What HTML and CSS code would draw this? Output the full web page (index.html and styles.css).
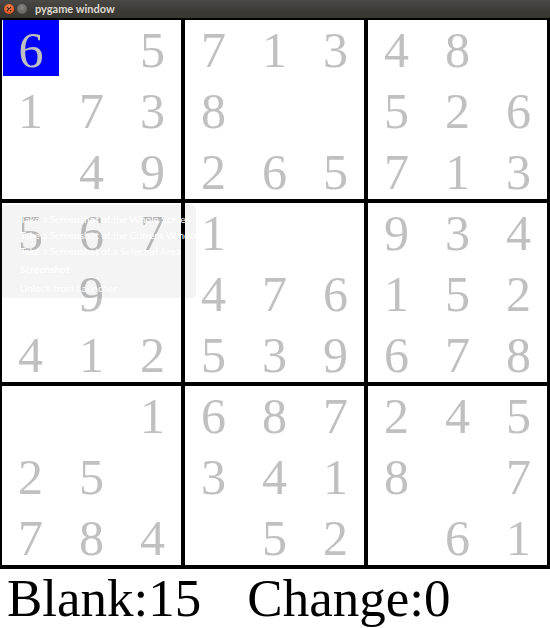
FILE: index.html
```html
<!DOCTYPE html>
<html>
<head>
<meta charset="utf-8">
<link rel="stylesheet" href="styles.css">
</head>
<body>
<div class="window">
  <div class="titlebar">
    <span class="btn close"><svg viewBox="0 0 10 10" width="10" height="10"><path d="M3.3 3.3 L6.7 6.7 M6.7 3.3 L3.3 6.7" stroke="#3a2a22" stroke-width="1.2" stroke-linecap="round"/></svg></span>
    <span class="btn min"></span>
    <span class="title">pygame window</span>
  </div>
  <div class="board">
    <div class="block">
      <div class="cell sel">6</div><div class="cell"></div><div class="cell">5</div>
      <div class="cell">1</div><div class="cell">7</div><div class="cell">3</div>
      <div class="cell"></div><div class="cell">4</div><div class="cell">9</div>
    </div>
    <div class="block">
      <div class="cell">7</div><div class="cell">1</div><div class="cell">3</div>
      <div class="cell">8</div><div class="cell"></div><div class="cell"></div>
      <div class="cell">2</div><div class="cell">6</div><div class="cell">5</div>
    </div>
    <div class="block">
      <div class="cell">4</div><div class="cell">8</div><div class="cell"></div>
      <div class="cell">5</div><div class="cell">2</div><div class="cell">6</div>
      <div class="cell">7</div><div class="cell">1</div><div class="cell">3</div>
    </div>
    <div class="block">
      <div class="cell">5</div><div class="cell">6</div><div class="cell">7</div>
      <div class="cell"></div><div class="cell">9</div><div class="cell"></div>
      <div class="cell">4</div><div class="cell">1</div><div class="cell">2</div>
    </div>
    <div class="block">
      <div class="cell">1</div><div class="cell"></div><div class="cell"></div>
      <div class="cell">4</div><div class="cell">7</div><div class="cell">6</div>
      <div class="cell">5</div><div class="cell">3</div><div class="cell">9</div>
    </div>
    <div class="block">
      <div class="cell">9</div><div class="cell">3</div><div class="cell">4</div>
      <div class="cell">1</div><div class="cell">5</div><div class="cell">2</div>
      <div class="cell">6</div><div class="cell">7</div><div class="cell">8</div>
    </div>
    <div class="block">
      <div class="cell"></div><div class="cell"></div><div class="cell">1</div>
      <div class="cell">2</div><div class="cell">5</div><div class="cell"></div>
      <div class="cell">7</div><div class="cell">8</div><div class="cell">4</div>
    </div>
    <div class="block">
      <div class="cell">6</div><div class="cell">8</div><div class="cell">7</div>
      <div class="cell">3</div><div class="cell">4</div><div class="cell">1</div>
      <div class="cell"></div><div class="cell">5</div><div class="cell">2</div>
    </div>
    <div class="block">
      <div class="cell">2</div><div class="cell">4</div><div class="cell">5</div>
      <div class="cell">8</div><div class="cell"></div><div class="cell">7</div>
      <div class="cell"></div><div class="cell">6</div><div class="cell">1</div>
    </div>
  </div>
  <div class="status"><span>Blank:15</span><span>Change:0</span></div>
  <div class="ghost-menu">
    <div class="gm-item i1">Take a Screenshot of the Whole Screen</div>
    <div class="gm-item i2">Take a Screenshot of the Current Window</div>
    <div class="gm-item i3">Take a Screenshot of a Selected Area</div>
    <div class="gm-item gm-title">Screenshot</div>
    <div class="gm-item i5">Unlock from Launcher</div>
  </div>
</div>
</body>
</html>
```

FILE: styles.css
```css
html, body {
  margin: 0;
  padding: 0;
  background: #ffffff;
}
.window {
  position: relative;
  width: 550px;
  height: 628px;
  overflow: hidden;
  background: #ffffff;
}
.titlebar {
  height: 18px;
  display: flex;
  align-items: center;
  background: linear-gradient(#4a4945, #3c3b37 60%, #37362f);
  box-sizing: border-box;
  padding-left: 4px;
}
.btn {
  width: 10px;
  height: 10px;
  border-radius: 50%;
  display: flex;
  align-items: center;
  justify-content: center;
}
.close {
  background: radial-gradient(circle at 50% 35%, #f58a5c, #e0531d 70%);
}
.min {
  margin-left: 3px;
  background: radial-gradient(circle at 50% 35%, #8a8985, #64635e 70%);
}
.title {
  margin-left: 8px;
  font-family: "Lato", "DejaVu Sans", sans-serif;
  font-weight: bold;
  font-size: 11px;
  color: #dfdbd2;
  line-height: 18px;
}
.board {
  display: grid;
  grid-template-columns: repeat(3, 179px);
  grid-template-rows: repeat(3, 179px);
  gap: 4px;
  padding: 2px 3px 4px 2px;
  background: #000000;
  width: 550px;
  box-sizing: border-box;
}
.block {
  background: #ffffff;
  display: grid;
  grid-template-columns: 57px 65px 57px;
  grid-template-rows: 57px 65px 57px;
}
.cell {
  display: flex;
  align-items: center;
  justify-content: center;
  font-family: "Liberation Serif", "Times New Roman", serif;
  font-size: 50px;
  line-height: 1;
  color: #c0c0c0;
  padding-top: 3px;
  box-sizing: border-box;
}
.cell.sel {
  background: #0000ff;
  margin: 0 0 1px 1px;
}
.status {
  display: flex;
  gap: 46px;
  padding-left: 7px;
  height: 59px;
  font-family: "Liberation Serif", "Times New Roman", serif;
  font-size: 53px;
  line-height: 59px;
  color: #000000;
}
.ghost-menu {
  position: absolute;
  left: 0;
  top: 205px;
  width: 196px;
  height: 93px;
  box-sizing: border-box;
  padding: 7px 0 0 20px;
  background: rgba(0, 0, 0, 0.045);
  border-radius: 0 4px 4px 0;
  font-family: "Lato", "DejaVu Sans", sans-serif;
  font-size: 10px;
  color: #ffffff;
  display: flex;
  flex-direction: column;
  white-space: nowrap;
}
.gm-item {
  height: 15px;
  line-height: 15px;
}
.i2, .i3 {
  height: 16px;
  line-height: 16px;
}
.gm-title {
  height: 20px;
  line-height: 20px;
  font-weight: bold;
}
.i5 {
  height: 19px;
  line-height: 19px;
}
```
